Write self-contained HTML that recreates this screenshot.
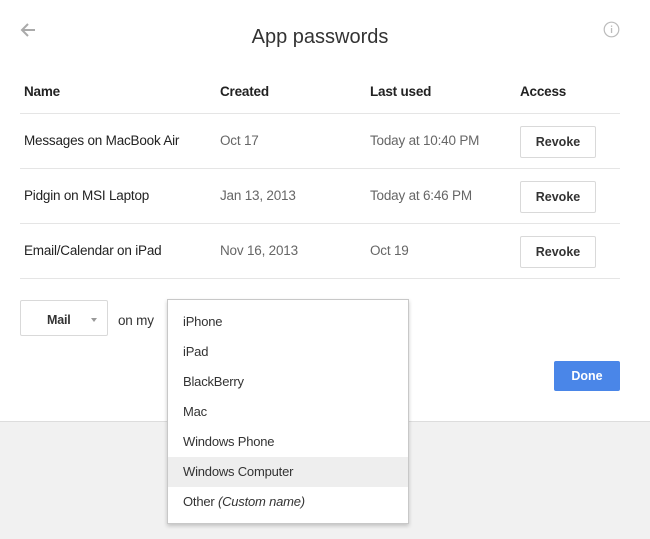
<!DOCTYPE html>
<html><head><style>
body{margin:0;width:650px;height:539px;background:#f1f1f1;font-family:"Liberation Sans",sans-serif;position:relative;overflow:hidden;color:#222}
.top{position:absolute;left:0;top:0;width:650px;height:421px;background:#fff;border-bottom:1px solid #ddd}
.a{position:absolute;white-space:nowrap;font-size:13.5px;letter-spacing:-0.2px}
.h{font-weight:bold;color:#222}
.g{color:#666}
.line{position:absolute;left:20px;width:600px;height:1px;background:#e5e5e5}
.btn{position:absolute;left:520px;width:74px;height:30px;border:1px solid #d9d9d9;border-radius:2px;background:#fff;font-weight:bold;font-size:12.5px;text-align:center;line-height:30px;color:#333}
.dd{position:absolute;left:167px;top:299px;width:240px;height:223px;background:#fff;border:1px solid #c8c8c8;box-shadow:0 2px 4px rgba(0,0,0,.2)}
.it{position:absolute;left:0;width:240px;height:30px;line-height:30px;padding-left:15px;box-sizing:border-box;font-size:13px;color:#333;letter-spacing:-0.2px}
</style></head><body>
<div class="top"></div>
<svg style="position:absolute;left:19px;top:22px" width="18" height="16" viewBox="0 0 18 16"><path d="M16 8H3M9 2L3 8l6 6" stroke="#aaa" stroke-width="2" fill="none"/></svg>
<svg style="position:absolute;left:603px;top:21px" width="17" height="17" viewBox="0 0 17 17"><circle cx="8.5" cy="8.5" r="7.3" stroke="#bbb" stroke-width="1.2" fill="none"/><rect x="7.9" y="7" width="1.3" height="5" fill="#bbb"/><rect x="7.9" y="4.5" width="1.3" height="1.4" fill="#bbb"/></svg>
<div class="a" style="left:0;width:640px;text-align:center;top:26px;font-size:20px;color:#333;letter-spacing:0">App passwords</div>
<div class="a h" style="left:24px;top:84px">Name</div>
<div class="a h" style="left:220px;top:84px">Created</div>
<div class="a h" style="left:370px;top:84px">Last used</div>
<div class="a h" style="left:520px;top:84px">Access</div>
<div class="line" style="top:113px"></div>
<div class="a" style="left:24px;top:133px">Messages on MacBook Air</div>
<div class="a g" style="left:220px;top:133px">Oct 17</div>
<div class="a g" style="left:370px;top:133px">Today at 10:40 PM</div>
<div class="btn" style="top:126px">Revoke</div>
<div class="line" style="top:168px"></div>
<div class="a" style="left:24px;top:188px">Pidgin on MSI Laptop</div>
<div class="a g" style="left:220px;top:188px">Jan 13, 2013</div>
<div class="a g" style="left:370px;top:188px">Today at 6:46 PM</div>
<div class="btn" style="top:181px">Revoke</div>
<div class="line" style="top:223px"></div>
<div class="a" style="left:24px;top:243px">Email/Calendar on iPad</div>
<div class="a g" style="left:220px;top:243px">Nov 16, 2013</div>
<div class="a g" style="left:370px;top:243px">Oct 19</div>
<div class="btn" style="top:236px">Revoke</div>
<div class="line" style="top:278px"></div>
<div style="position:absolute;left:20px;top:300px;width:86px;height:34px;border:1px solid #d9d9d9;border-radius:2px;background:#fff"></div>
<div class="a h" style="left:47px;top:313px;font-size:12.5px;color:#333">Mail</div>
<div style="position:absolute;left:91px;top:318px;border-left:3.5px solid transparent;border-right:3.5px solid transparent;border-top:4px solid #999"></div>
<div class="a" style="left:118px;top:313px;color:#333">on my</div>
<div style="position:absolute;left:554px;top:361px;width:66px;height:30px;background:#4a86e8;border-radius:2px;color:#fff;font-weight:bold;font-size:12.5px;text-align:center;line-height:30px">Done</div>
<div class="dd">
<div class="it" style="top:7px">iPhone</div>
<div class="it" style="top:37px">iPad</div>
<div class="it" style="top:67px">BlackBerry</div>
<div class="it" style="top:97px">Mac</div>
<div class="it" style="top:127px">Windows Phone</div>
<div class="it" style="top:157px;background:#eee">Windows Computer</div>
<div class="it" style="top:187px">Other <i>(Custom name)</i></div>
</div>
</body></html>
